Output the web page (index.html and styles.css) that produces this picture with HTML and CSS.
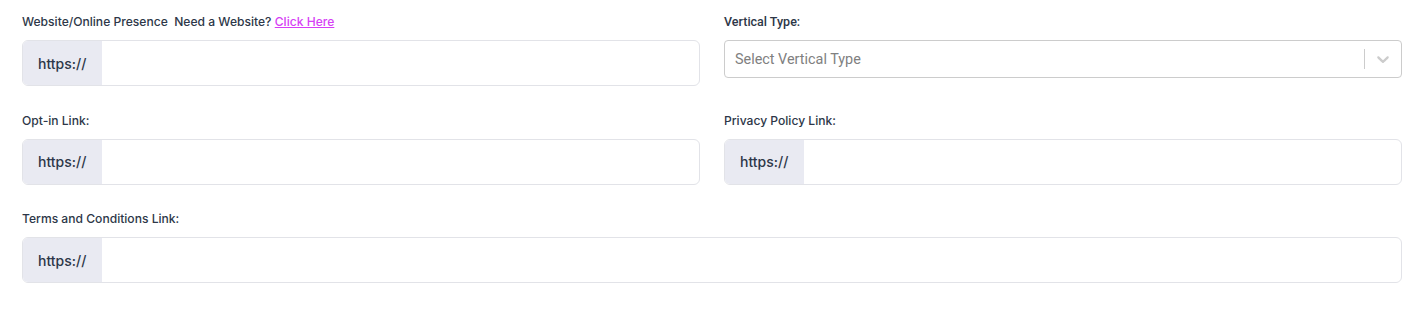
FILE: index.html
```html
<!DOCTYPE html>
<html lang="en">
  <head>
    <meta charset="UTF-8" />
    <meta name="viewport" content="width=device-width, initial-scale=1.0" />
    <title>Business Links</title>
    <link rel="stylesheet" href="styles.css">
  </head>
  <body>
    <form class="links-form">
      <div class="field">
        <label class="field-label">
          Website/Online Presence&nbsp; Need a Website?
          <a href="#" class="field-link">Click Here</a>
        </label>
        <div class="input-group">
          <span class="prefix">https://</span>
          <input type="text" class="url-input" />
        </div>
      </div>

      <div class="field">
        <label class="field-label select-label">Vertical Type:</label>
        <div class="select-box">
          <span class="select-placeholder">Select Vertical Type</span>
          <span class="select-separator"></span>
          <span class="select-indicator">
            <svg width="20" height="20" viewBox="0 0 20 20" aria-hidden="true">
              <path d="M4.516 7.548c0.436-0.446 1.043-0.481 1.576 0l3.908 3.747 3.908-3.747c0.533-0.481 1.141-0.446 1.574 0 0.436 0.445 0.408 1.197 0 1.615-0.406 0.418-4.695 4.502-4.695 4.502-0.217 0.223-0.502 0.335-0.787 0.335s-0.57-0.112-0.789-0.335c0 0-4.287-4.084-4.695-4.502s-0.436-1.170 0-1.615z" fill="currentColor"/>
            </svg>
          </span>
        </div>
      </div>

      <div class="field">
        <label class="field-label">Opt-in Link:</label>
        <div class="input-group">
          <span class="prefix">https://</span>
          <input type="text" class="url-input" />
        </div>
      </div>

      <div class="field">
        <label class="field-label">Privacy Policy Link:</label>
        <div class="input-group">
          <span class="prefix">https://</span>
          <input type="text" class="url-input" />
        </div>
      </div>

      <div class="field field-wide">
        <label class="field-label">Terms and Conditions Link:</label>
        <div class="input-group">
          <span class="prefix">https://</span>
          <input type="text" class="url-input" />
        </div>
      </div>
    </form>
  </body>
</html>
```

FILE: styles.css
```css
/* Reset default styles */
* {
  margin: 0;
  padding: 0;
  box-sizing: border-box;
}

body {
  font-family: Inter, "Noto Sans", sans-serif;
  background-color: #fff;
  color: #2d3748;
}

.links-form {
  display: grid;
  grid-template-columns: 1fr 1fr;
  column-gap: 24px;
  row-gap: 26.5px;
  padding: 14px 22px 0 22px;
}

.field-wide {
  grid-column: 1 / -1;
}

.field-label {
  display: block;
  font-size: 12.1px;
  font-weight: 500;
  line-height: 16px;
  margin-bottom: 10px;
  color: #2d3748;
}

.select-label {
  font-family: Roboto, sans-serif;
  font-size: 12.5px;
}

.field-link {
  color: #d63ff5;
  text-decoration: underline;
}

.input-group {
  display: flex;
  height: 46px;
  border: 1px solid #e2e3e8;
  border-radius: 6px;
  overflow: hidden;
  background-color: #fff;
}

.prefix {
  display: flex;
  align-items: center;
  width: 79px;
  padding-left: 15px;
  background-color: #e9eaf2;
  font-size: 14px;
  font-weight: 500;
  color: #2d3748;
}

.url-input {
  flex: 1;
  border: none;
  outline: none;
  font-family: inherit;
  font-size: 14px;
  padding: 0 12px;
  background: transparent;
}

.select-box {
  display: flex;
  align-items: center;
  height: 38px;
  border: 1px solid #ccc;
  border-radius: 4px;
  background-color: #fff;
  font-family: Roboto, sans-serif;
}

.select-placeholder {
  flex: 1;
  padding: 0 10px;
  font-size: 14.4px;
  color: #808080;
}

.select-separator {
  align-self: stretch;
  width: 1px;
  margin: 8px 0;
  background-color: #ccc;
}

.select-indicator {
  display: flex;
  padding: 8px;
  color: #ccc;
}
```
